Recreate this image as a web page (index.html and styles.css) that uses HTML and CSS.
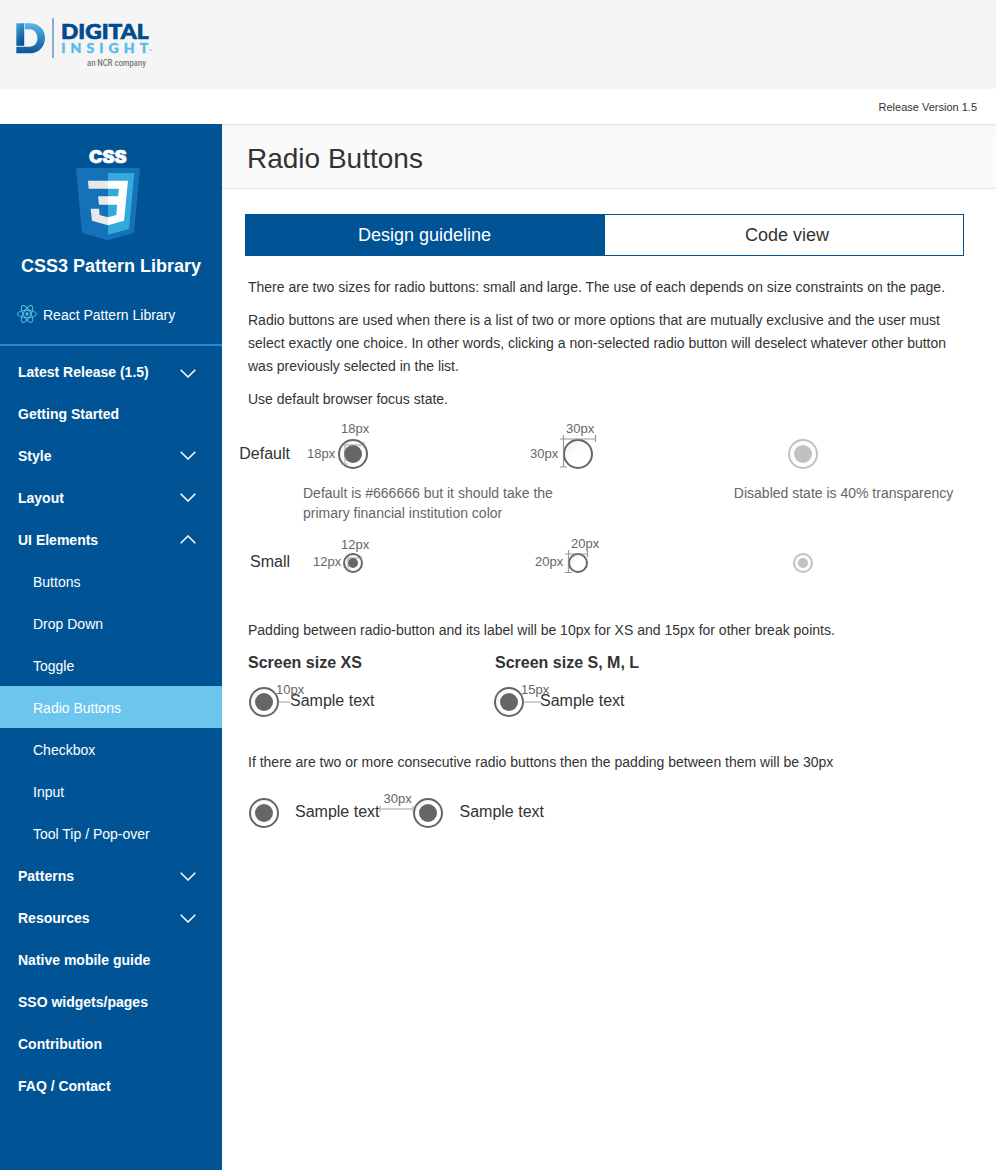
FILE: index.html
```html
<!DOCTYPE html>
<html lang="en">
<head>
<meta charset="utf-8">
<title>Radio Buttons - CSS3 Pattern Library</title>
<link rel="stylesheet" href="styles.css">
</head>
<body>
<header class="masthead">
  <svg class="brand" width="155" height="75" viewBox="0 0 155 75" role="img" aria-label="Digital Insight">
    <defs>
      <linearGradient id="stem" x1="0" y1="0" x2="0.4" y2="1"><stop offset="0" stop-color="#46a9de"/><stop offset="1" stop-color="#07539a"/></linearGradient>
      <linearGradient id="bowl" x1="0" y1="0" x2="0" y2="1"><stop offset="0" stop-color="#58b9e8"/><stop offset="1" stop-color="#0a559b"/></linearGradient>
    </defs>
    <path d="M16.3 23.3H24.2V45.8H16.3Z" fill="url(#stem)"/>
    <path d="M25 23.3H30C39 23.3 45 29.5 45 38S39 53.2 30 53.2H16.3V46.8H29.5C34.5 46.8 37.4 43 37.4 38.3S34.5 29.3 29.5 29.3H25Z" fill="url(#bowl)"/>
    <path d="M53 18.3V58" stroke="#6f9bc4" stroke-width="1.6"/>
    <text class="brand-top" x="61" y="39.4" textLength="87.5" lengthAdjust="spacingAndGlyphs">DIGITAL</text>
    <text class="brand-bottom" x="61.2" y="53.1" textLength="87">INSIGHT</text>
    <text class="brand-tm" x="148.5" y="53">™</text>
    <text class="brand-note" x="87" y="65.8" textLength="59" lengthAdjust="spacingAndGlyphs">an NCR company</text>
  </svg>
</header>
<div class="version">Release Version 1.5</div>
<div class="layout">
  <aside class="sidebar">
    <svg class="css-logo" width="64" height="97" viewBox="0 -18 192 291" role="img" aria-label="CSS3">
      <text class="css-word" x="39" y="38" textLength="113" lengthAdjust="spacingAndGlyphs">CSS</text>
      <path d="M0 54H192L174 248L96 271L18 248Z" fill="#1572b8"/>
      <path d="M96 69H175L159 237L96 254Z" fill="#33a9dc"/>
      <path d="M36 92H96V116H38ZM66 139H96V164H69ZM44 176H69L71 195L96 202V226L48 212Z" fill="#e8e8e8"/>
      <path d="M96 92H156L144 212L96 226V202L121 195L123 164H96V139H126L129 116H96Z" fill="#fff"/>
    </svg>
    <h2 class="library-title">CSS3 Pattern Library</h2>
    <a class="react-link">
      <svg width="20" height="20" viewBox="-10 -10 20 20" fill="none" stroke="#53c1de" stroke-width="1">
        <circle r="1.7" fill="#53c1de" stroke="none"/>
        <ellipse rx="9.5" ry="3.7"/><ellipse rx="9.5" ry="3.7" transform="rotate(60)"/><ellipse rx="9.5" ry="3.7" transform="rotate(120)"/>
      </svg>
      <span>React Pattern Library</span>
    </a>
    <nav class="nav">
      <a class="item">Latest Release (1.5)<svg class="chevron low" viewBox="0 0 16 9"><path d="M.7.7L8 8L15.3.7"/></svg></a>
      <a class="item">Getting Started</a>
      <a class="item">Style<svg class="chevron high" viewBox="0 0 16 9"><path d="M.7.7L8 8L15.3.7"/></svg></a>
      <a class="item">Layout<svg class="chevron high" viewBox="0 0 16 9"><path d="M.7.7L8 8L15.3.7"/></svg></a>
      <a class="item">UI Elements<svg class="chevron high" viewBox="0 0 16 9"><path d="M.7 8.3L8 1L15.3 8.3"/></svg></a>
      <a class="item sub">Buttons</a>
      <a class="item sub">Drop Down</a>
      <a class="item sub">Toggle</a>
      <a class="item sub active">Radio Buttons</a>
      <a class="item sub">Checkbox</a>
      <a class="item sub">Input</a>
      <a class="item sub">Tool Tip / Pop-over</a>
      <a class="item">Patterns<svg class="chevron" viewBox="0 0 16 9"><path d="M.7.7L8 8L15.3.7"/></svg></a>
      <a class="item">Resources<svg class="chevron" viewBox="0 0 16 9"><path d="M.7.7L8 8L15.3.7"/></svg></a>
      <a class="item">Native mobile guide</a>
      <a class="item">SSO widgets/pages</a>
      <a class="item">Contribution</a>
      <a class="item">FAQ / Contact</a>
    </nav>
  </aside>
  <main class="main">
    <h1 class="page-title">Radio Buttons</h1>
    <div class="tabs"><div class="tab selected">Design guideline</div><div class="tab code">Code view</div></div>
    <div class="copy">
      <p>There are two sizes for radio buttons: small and large. The use of each depends on size constraints on the page.</p>
      <p>Radio buttons are used when there is a list of two or more options that are mutually exclusive and the user must<br>select exactly one choice. In other words, clicking a non-selected radio button will deselect whatever other button<br>was previously selected in the list.</p>
      <p>Use default browser focus state.</p>
    </div>
    <div class="specs">
      <div class="spec-label">Default</div>
      <div class="spec-cells">
        <div class="radio on"><span class="dim t18">18px</span><span class="dim l18">18px</span><svg class="ruler r18" width="27" height="27"><path d="M4 5H25M24 2V8M5 2V25M1 24H8"/></svg></div>
        <div class="radio"><span class="dim t30">30px</span><span class="dim l30">30px</span><svg class="ruler thin r30" width="38" height="36"><path d="M0 4H36M35.5 0V7M3.5 0V32M0 32H7"/></svg></div>
        <div class="radio on disabled"></div>
      </div>
    </div>
    <div class="captions">
      <p>Default is #666666 but it should take the<br>primary financial institution color</p>
      <p>Disabled state is 40% transparency</p>
    </div>
    <div class="specs small">
      <div class="spec-label">Small</div>
      <div class="spec-cells">
        <div class="radio mini on"><span class="dim t12">12px</span><span class="dim l12">12px</span><svg class="ruler r12" width="18" height="18"><path d="M3 3H17M16 1V5M3 1V16M1 15H6"/></svg></div>
        <div class="radio mini"><span class="dim t20">20px</span><span class="dim l20">20px</span><svg class="ruler thin r20" width="25" height="25"><path d="M0 4H22M22.5 1V7M3.5 0V23M0 22.5H7"/></svg></div>
        <div class="radio mini on disabled"></div>
      </div>
    </div>
    <p class="line">Padding between radio-button and its label will be 10px for XS and 15px for other break points.</p>
    <div class="samples">
      <section>
        <h3>Screen size XS</h3>
        <div class="option xs"><div class="radio on"><span class="dim gap-label">10px</span><svg class="ruler gap-rule" width="20" height="8"><path d="M0 4H12"/></svg></div><span>Sample text</span></div>
      </section>
      <section>
        <h3>Screen size S, M, L</h3>
        <div class="option sml"><div class="radio on"><span class="dim gap-label">15px</span><svg class="ruler gap-rule" width="20" height="8"><path d="M0 4H18"/></svg></div><span>Sample text</span></div>
      </section>
    </div>
    <p class="line second">If there are two or more consecutive radio buttons then the padding between them will be 30px</p>
    <div class="pair">
      <div class="option"><div class="radio on"></div><span>Sample text</span></div>
      <div class="option"><div class="radio on"><span class="dim between">30px</span><svg class="ruler between-rule" width="35" height="8"><path d="M1 4H34M1 1V7M34 1V7"/></svg></div><span>Sample text</span></div>
    </div>
  </main>
</div>
</body>
</html>
```
FILE: styles.css
```css
* { box-sizing: border-box; }
body { margin: 0; background: #fff; color: #333; font: 14px/23px "Liberation Sans", Arial, sans-serif; }
h1, h2, h3, p { margin: 0; }
.masthead { height: 89px; background: #f5f5f5; }
.brand { display: block; }
.brand-top { font: 900 21.6px Lato, sans-serif; fill: #004b8e; stroke: #004b8e; stroke-width: .7; }
.brand-bottom { font: 900 14px Lato, sans-serif; fill: #55bdea; stroke: #55bdea; stroke-width: .4; }
.brand-tm { font: 5px Lato, sans-serif; fill: #55bdea; }
.brand-note { font: 500 8.3px Roboto, sans-serif; fill: #777; }
.version { height: 35px; padding-right: 19px; text-align: right; font-size: 11px; line-height: 36px; }
.layout { display: flex; height: 1046px; }
.sidebar { width: 222px; flex: none; background: #005496; color: #fff; }
.css-logo { display: block; margin: 20px 0 0 76px; }
.css-word { font: 900 50px Inter, sans-serif; fill: #fff; stroke: #fff; stroke-width: 2; }
.library-title { margin-top: 13px; text-align: center; font-size: 18px; line-height: 24px; }
.react-link { display: flex; align-items: center; gap: 6px; height: 68px; padding: 6px 0 0 17px; border-bottom: 2px solid #2b87cb; margin-bottom: 4px; }
.react-link span { padding-top: 2px; }
.item { display: flex; align-items: center; justify-content: space-between; height: 42px; padding: 2px 26px 0 18px; font-weight: bold; }
.sub { padding-left: 33px; font-weight: normal; }
.active { background: #6cc5ec; }
.chevron { width: 16px; height: 9px; fill: none; stroke: #fff; stroke-width: 1.5; }
.chevron.low { margin-top: 3px; }
.chevron.high { margin-bottom: 2px; }
.main { flex: 1; min-width: 0; }
.page-title { height: 65px; padding: 0 25px; border-top: 1px solid #e5e5e5; border-bottom: 1px solid #e5e5e5; background: linear-gradient(#f5f5f5, #fafafa 6px); font-size: 28px; font-weight: normal; line-height: 68px; }
.tabs { display: flex; width: 719px; height: 42px; margin: 25px 0 20px 23px; border: 1px solid #005496; }
.tab { flex: 1; text-align: center; font-size: 18px; line-height: 40px; }
.selected { flex: 0 0 359px; padding-right: 2px; background: #005496; color: #fff; }
.code { padding-left: 6px; }
.copy { display: grid; gap: 10px; padding-left: 26px; white-space: nowrap; }
.specs { display: flex; align-items: center; gap: 48px; height: 30px; margin-top: 28px; }
.spec-label { width: 68px; padding-bottom: 2px; text-align: right; font-size: 16px; }
.spec-cells { display: grid; grid-template-columns: repeat(3, 30px); column-gap: 195px; place-items: center; }
.radio { position: relative; flex: none; width: 30px; height: 30px; border: 2px solid #666; border-radius: 50%; background: linear-gradient(135deg, #f0f0f0, #fff 45%); }
.mini { width: 20px; height: 20px; }
.on::after { content: ""; position: absolute; inset: 4px; border-radius: 50%; background: #666; }
.mini.on::after { inset: 3px; }
.disabled { opacity: .4; }
.dim { position: absolute; z-index: 2; color: #666; font-size: 13px; line-height: 16px; }
.t18 { left: 1px; top: -20px; }
.l18 { left: -33px; top: 5px; }
.t30 { left: 1px; top: -20px; }
.l30 { left: -35px; top: 5px; }
.t12 { left: -4px; top: -18px; }
.l12 { left: -32px; top: -1px; }
.t20 { left: 1px; top: -19px; }
.l20 { left: -35px; top: -1px; }
.ruler { position: absolute; z-index: 1; fill: none; stroke: #888; stroke-opacity: .4; stroke-width: 2; }
.thin { stroke-width: 1.2; stroke-opacity: .85; }
.r18 { left: 0; top: -1px; }
.r30 { left: -5px; top: -6px; }
.r12 { left: 0; top: 0; }
.r20 { left: -5px; top: -5px; }
.captions { display: flex; gap: 181px; margin: 14px 0 0 81px; color: #666; line-height: 20px; white-space: nowrap; }
.small { margin-top: 25px; }
.small .spec-label { padding-bottom: 4px; }
.line { margin: 41px 0 0 26px; white-space: nowrap; }
.samples { display: grid; grid-template-columns: 245px 1fr; padding: 10px 0 0 27px; }
.samples h3 { margin-left: -1px; font-size: 16px; line-height: 22px; }
.samples section + section h3 { margin-left: 1px; }
.option { display: flex; align-items: center; font-size: 16px; }
.samples .option { margin-top: 13px; }
.option > span { line-height: 26px; padding-bottom: 2px; }
.xs { gap: 11px; }
.sml { gap: 16px; }
.gap-label { left: 25px; top: -7px; }
.gap-rule { left: 27px; top: 9px; }
.second { margin-top: 34px; }
.pair { display: flex; gap: 34px; margin: 24px 0 0 27px; }
.pair .option { gap: 16px; }
.between { left: -32px; top: -9px; }
.between-rule { left: -36px; top: 5px; }
```
